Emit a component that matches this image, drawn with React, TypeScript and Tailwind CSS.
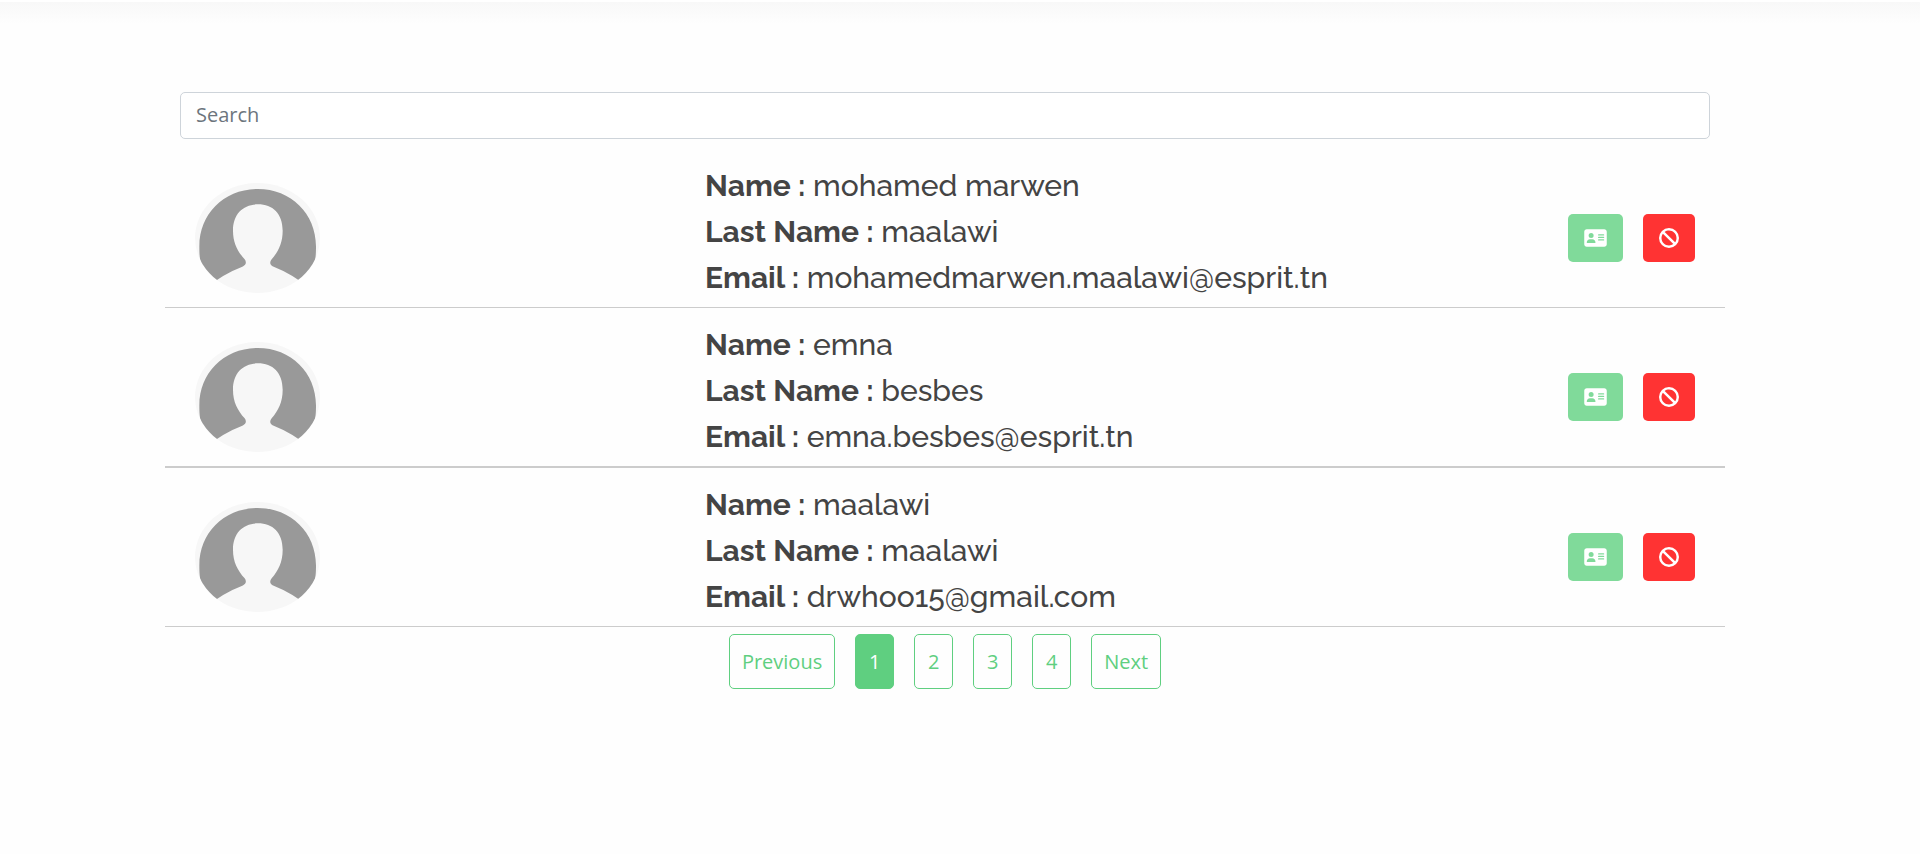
import { FaAddressCard, FaBan } from "react-icons/fa6";

type User = { name: string; lastName: string; email: string };

const users: User[] = [
  { name: "mohamed marwen", lastName: "maalawi", email: "mohamedmarwen.maalawi@esprit.tn" },
  { name: "emna", lastName: "besbes", email: "emna.besbes@esprit.tn" },
  { name: "maalawi", lastName: "maalawi", email: "drwhoo15@gmail.com" },
];

const pages = ["Previous", "1", "2", "3", "4", "Next"];

function Avatar() {
  return (
    <svg viewBox="0 0 375 330" className="h-[110px] w-[125px] rounded-[50%] bg-[#f7f7f7]" aria-hidden="true">
      <path
        d="M13 190C13 92 88 18 188 18S363 92 363 190C363 215 362 225 358 240L350 320Q293 273 236 251C224 246 223 237 230 229C250 205 263 180 263 143C263 92 233 64 189 64C145 64 114 92 114 143C114 180 128 205 149 229C155 237 154 246 142 251Q83 273 26 320L18 240C14 225 13 215 13 190Z"
        fill="#999"
      />
    </svg>
  );
}

function Field({ label, value }: { label: string; value: string }) {
  return (
    <p>
      <strong className="font-bold">{label} :</strong> {value}
    </p>
  );
}

export default function App() {
  return (
    <div className="min-h-screen bg-[#fefefe] font-['Open_Sans',sans-serif] text-[#444]">
      <header className="h-0.5 bg-white" />
      <div className="h-[22px] bg-linear-to-b from-[#f8f8f8] to-[#fefefe]" />
      <div className="pr-[30px]">
        <main className="mx-auto max-w-[1590px] px-[15px] pt-[68px]">
          <div className="px-[15px]">
            <input
              type="search"
              aria-label="Search"
              placeholder="Search"
              className="block h-[47px] w-full rounded-[5px] border border-[#ced4da] bg-white px-[15px] pb-0.5 text-xl placeholder:text-[#6c757d]"
            />
          </div>
          <ul className="pt-2.5">
            {users.map((user) => (
              <li
                key={user.email}
                className="grid grid-cols-[1fr_2fr_1fr] border-b border-[#ccc] nth-2:border-b-2"
              >
                <div className="px-[30px] pt-[34px]">
                  <Avatar />
                </div>
                <div className="pt-3.5 pb-1.5 pl-[150px] font-[Raleway,Lato,sans-serif] text-[30px] leading-[46px] font-medium">
                  <Field label="Name" value={user.name} />
                  <Field label="Last Name" value={user.lastName} />
                  <Field label="Email" value={user.email} />
                </div>
                <div className="flex items-start justify-end gap-5 pt-[65px] pr-[30px]">
                  <button
                    aria-label="View profile"
                    className="flex h-12 w-[55px] items-center justify-center rounded-[5px] bg-[#80da9a] text-white"
                  >
                    <FaAddressCard className="h-5 w-[23px]" />
                  </button>
                  <button
                    aria-label="Ban user"
                    className="flex h-12 w-[52px] items-center justify-center rounded-[5px] bg-[#f33] text-white"
                  >
                    <FaBan className="size-5" />
                  </button>
                </div>
              </li>
            ))}
          </ul>
          <nav aria-label="Pagination" className="flex justify-center gap-5 pt-[7px]">
            {pages.map((page) => (
              <button
                key={page}
                aria-current={page === "1" ? "page" : undefined}
                className="h-[55px] min-w-[39px] rounded-[5px] border border-[#5fcf80] px-3 text-xl text-[#5fcf80] aria-[current=page]:bg-[#5fcf80] aria-[current=page]:text-white"
              >
                {page}
              </button>
            ))}
          </nav>
        </main>
      </div>
    </div>
  );
}
